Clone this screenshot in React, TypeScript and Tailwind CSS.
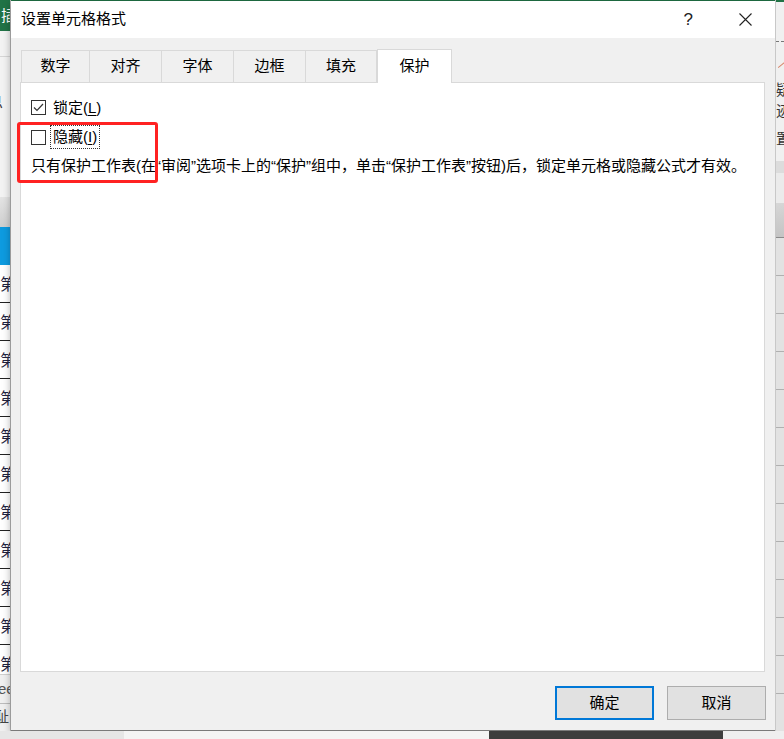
import React from "react";

const F = "font-['Liberation_Sans','Noto_Sans_CJK_SC',sans-serif]";

function LeftStrip() {
  const rows = Array.from({ length: 10 });
  return (
    <div className="w-[11px] h-[731px] flex flex-col overflow-hidden bg-[#f0f0f0] border-r border-[#b8b8b8]">
      <div className="h-[31px] shrink-0 bg-[#217346] text-white text-[15px] leading-[31px] pl-[1px] overflow-hidden whitespace-nowrap">插</div>
      <div className="h-[166px] shrink-0 bg-[#f3f3f3] flex flex-col overflow-hidden">
        <div className="h-[26px] border-b border-[#d6d6d6]" />
        <div className="mt-[35px] -ml-[12px] text-[15px] leading-[20px] text-[#333] whitespace-nowrap">息</div>
      </div>
      <div className="h-[30px] shrink-0 bg-gradient-to-b from-[#e4e4e4] to-[#cfcfcf]" />
      <div className="h-[38px] shrink-0 bg-[#0e9be0]" />
      {rows.map((_, i) => (
        <div key={i} className="h-[38px] shrink-0 bg-white border-b border-[#222] flex items-end pb-[9px] overflow-hidden">
          <span className="text-[16px] leading-[17px] text-[#1f2340] whitespace-nowrap">第</span>
        </div>
      ))}
      <div className="h-[30px] shrink-0 bg-white flex items-end pb-[1px] overflow-hidden border-b border-[#d0d0d0]">
        <span className="text-[16px] leading-[17px] text-[#1f2340] whitespace-nowrap">第</span>
      </div>
      <div className="h-[29px] shrink-0 border-b border-[#bcbcbc] flex items-center overflow-hidden">
        <span className="text-[15px] text-[#555] whitespace-nowrap -ml-[2px]">ee</span>
      </div>
      <div className="flex-1 flex items-center overflow-hidden">
        <span className="text-[15px] text-[#444] whitespace-nowrap -ml-[6px]">耻</span>
      </div>
    </div>
  );
}

function RightStrip() {
  const lines = Array.from({ length: 13 });
  return (
    <div className="w-[9px] h-[731px] flex flex-col overflow-hidden bg-[#f0f0f0] border-l border-[#c8c8c8]">
      <div className="h-[2px] shrink-0 bg-[#217346]" />
      <div className="h-[39px] shrink-0" />
      <div className="h-[1px] shrink-0 border-t border-dashed border-[#777]" />
      <div className="h-[37px] shrink-0 relative overflow-hidden">
        <div className="absolute left-[1px] top-[22px] w-[10px] h-[1px] bg-[#d9856a] rotate-[-40deg]" />
      </div>
      <div className="text-[15px] leading-[21px] text-[#333] whitespace-nowrap">疑</div>
      <div className="text-[15px] leading-[21px] text-[#333] whitespace-nowrap">迹</div>
      <div className="h-[7px] shrink-0" />
      <div className="text-[15px] leading-[21px] text-[#333] whitespace-nowrap">置</div>
      <div className="h-[12px] shrink-0" />
      <div className="h-[12px] shrink-0 bg-[#dcdcdc]" />
      <div className="h-[30px] shrink-0 bg-[#ebebeb]" />
      <div className="h-[35px] shrink-0 bg-gradient-to-b from-[#d6d6d6] to-[#c4c4c4] border-b border-[#8a8a8a]" />
      {lines.map((_, i) => (
        <div key={i} className="h-[38px] shrink-0 bg-[#e2e2e2] border-b border-[#b0b0b0]" />
      ))}
    </div>
  );
}

function Check({ checked }: { checked: boolean }) {
  return (
    <div className="w-[15px] h-[15px] border border-[#333] bg-white flex items-center justify-center shrink-0">
      {checked && (
        <svg width="13" height="13" viewBox="0 0 13 13">
          <path d="M2 6.5 L5 9.5 L11 3" fill="none" stroke="#333" strokeWidth="1.2" />
        </svg>
      )}
    </div>
  );
}

const tabs = ["数字", "对齐", "字体", "边框", "填充"];
const tabWidths = ["w-[69px]", "w-[72px]", "w-[72px]", "w-[72px]", "w-[71px]"];

function Dialog() {
  return (
    <div className="w-[764px] h-[730px] flex flex-col bg-[#f0f0f0] border-b border-[#7a7a7a] shadow-[0_2px_8px_rgba(0,0,0,0.35)]">
      {/* Title bar */}
      <div className="h-[37px] shrink-0 bg-white flex items-center pl-[10px]">
        <span className="text-[15px] text-black">设置单元格格式</span>
        <div className="flex-1" />
        <span className="text-[17px] text-[#222] mr-[46px] leading-none">?</span>
        <svg width="13" height="13" viewBox="0 0 13 13" className="mr-[23px]">
          <path d="M0.5 0.5 L12.5 12.5 M12.5 0.5 L0.5 12.5" stroke="#222" strokeWidth="1.1" />
        </svg>
      </div>

      {/* Tabs */}
      <div className="h-[44px] shrink-0 flex items-end pl-[10px] pt-[10px]">
        {tabs.map((t, i) => (
          <div
            key={t}
            className={`${tabWidths[i]} h-[32px] border border-[#d9d9d9] ${i > 0 ? "border-l-0" : ""} border-b-0 bg-[#f0f0f0] flex items-center justify-center text-[15px] text-black`}
          >
            {t}
          </div>
        ))}
        <div className="w-[75px] h-[34px] border border-[#d9d9d9] border-b-0 bg-white flex items-center justify-center text-[15px] text-black -mb-[1px] relative z-10 pb-[1px]">
          保护
        </div>
      </div>

      {/* Panel */}
      <div className="ml-[9px] mr-[10px] h-[590px] shrink-0 bg-white border border-[#d9d9d9] relative flex flex-col pl-[10px] pt-[14px]">
        <div className="h-[21px] flex items-center">
          <Check checked />
          <span className="ml-[4px] px-[2px] border border-transparent text-[15px] text-black leading-[20px]">
            锁定(<span className="underline underline-offset-2">L</span>)
          </span>
        </div>
        <div className="h-[24px] mt-[7px] flex items-center">
          <Check checked={false} />
          <span className="ml-[4px] px-[2px] h-[24px] flex items-center border border-dotted border-[#333] text-[15px] text-black">
            隐藏(<span className="underline underline-offset-2">I</span>)
          </span>
        </div>
        <div className="mt-[7px] h-[20px] text-[15px] leading-[20px] text-black whitespace-nowrap">
          只有保护工作表(在“审阅”选项卡上的“保护”组中，单击“保护工作表”按钮)后，锁定单元格或隐藏公式才有效。
        </div>
        <div className="absolute left-[-4px] top-[39px] w-[141px] h-[61px] border-[3px] border-[#ff2222] rounded-[3px] pointer-events-none" />
      </div>

      {/* Footer */}
      <div className="flex-1 flex justify-end items-start pt-[14px] pr-[9px] gap-[13px]">
        <button className="w-[99px] h-[34px] border-2 border-[#0078d7] bg-[#e1e1e1] text-[15px] text-black">确定</button>
        <button className="w-[99px] h-[34px] border border-[#adadad] bg-[#e1e1e1] text-[15px] text-black">取消</button>
      </div>
    </div>
  );
}

export default function App() {
  return (
    <div className={`w-[784px] h-[739px] overflow-hidden bg-[#f0f0f0] flex flex-col ${F}`}>
      <div className="h-[731px] flex">
        <LeftStrip />
        <div className="flex flex-col">
          <div className="h-[1px] shrink-0 bg-[#217346]" />
          <Dialog />
        </div>
        <RightStrip />
      </div>
      <div className="h-[8px] flex">
        <div className="w-[124px] bg-[#e6e6e6]" />
        <div className="w-[365px] bg-[#f4f4f4]" />
        <div className="w-[234px] bg-[#3d3d3d]" />
        <div className="flex-1 bg-[#efefef]" />
      </div>
    </div>
  );
}
